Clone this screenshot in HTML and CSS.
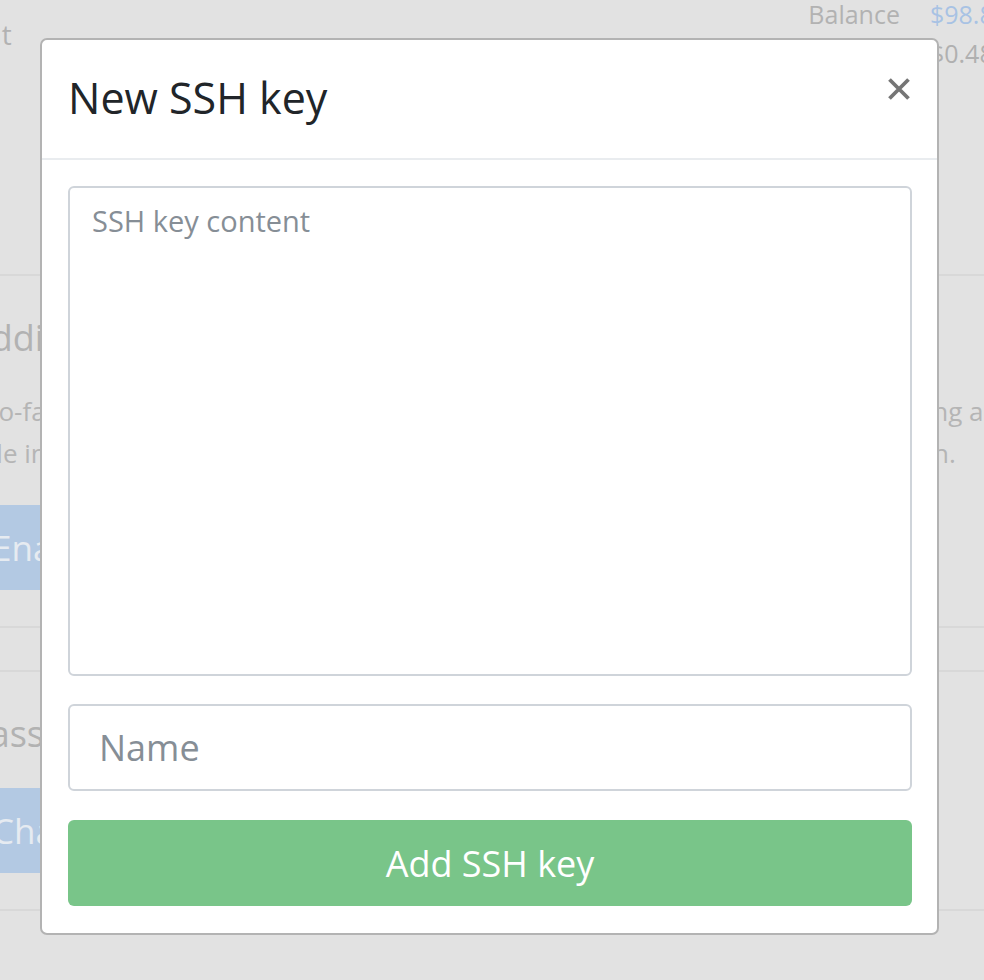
FILE: index.html
```html
<!DOCTYPE html>
<html lang="en">
<head>
    <meta charset="UTF-8">
    <meta name="viewport" content="width=device-width, initial-scale=1.0">
    <title>Account settings</title>
    <link rel="stylesheet" href="styles.css">
</head>
<body>
    <div class="page">
        <div class="topbar">
            <h1 class="title">Account</h1>
            <div class="balance">
                <span class="label">Balance</span>
                <span class="value blue">$98.85</span>
                <span class="label">Usage</span>
                <span class="value">$0.48</span>
            </div>
        </div>

        <div class="section">
            <h2>Additional security</h2>
            <p class="text">
                <span class="line">Two-factor authentication adds an additional layer of account security by requiring a code</span>
                <span class="line">Able in any phone authenticator app, so you will need a code each time you log in.</span>
            </p>
            <button class="btn-blue">Enable two-factor authentication</button>
        </div>

        <div class="section">
            <h2>Password</h2>
            <button class="btn-blue">Change password</button>
        </div>
    </div>

    <!-- modal -->
    <div class="modal">
        <div class="modal-header">
            <h3 class="modal-title">New SSH key</h3>
            <button class="close" aria-label="Close">
                <svg width="22" height="22" viewBox="0 0 22 22">
                    <path d="M1.5 1.5 L20.5 20.5 M20.5 1.5 L1.5 20.5" stroke="#757575" stroke-width="3.8" fill="none"/>
                </svg>
            </button>
        </div>
        <div class="modal-body">
            <textarea class="key-content" placeholder="SSH key content"></textarea>
            <input class="key-name" type="text" placeholder="Name">
            <button class="btn-add">Add SSH key</button>
        </div>
    </div>
</body>
</html>
```

FILE: styles.css
```css
html, body {
    margin: 0;
    height: 100%;
    overflow: hidden;
}
body {
    background: #e2e2e2;
    font-family: "Open Sans", "Liberation Sans", sans-serif;
    color: #b2b2b2;
}
.page {
    width: 1040px;
    margin-left: -32px;
}

/* background page, dimmed by the modal */
.topbar {
    display: flex;
    justify-content: space-between;
    align-items: flex-start;
    height: 274px;
    border-bottom: 2px solid #d8d8d8;
}
.title {
    margin: 14px 0 0 -62px;
    font-size: 28px;
    font-weight: 400;
    line-height: 40px;
}
.balance {
    display: grid;
    grid-template-columns: auto auto;
    column-gap: 30px;
    row-gap: 11px;
    font-size: 25px;
    line-height: 28px;
}
.value {
    color: #b0b0b0;
}
.blue {
    color: #a8c2e4;
}
.section {
    padding: 36px 0 36px;
    border-bottom: 2px solid #d8d8d8;
}
.section + .section {
    margin-top: 42px;
    border-top: 2px solid #d8d8d8;
}
.section h2 {
    margin: 0 0 26px;
    font-size: 36px;
    font-weight: 400;
    line-height: 52px;
}
.section + .section h2 {
    margin-bottom: 28px;
}
.text {
    margin: 0 0 31px -4px;
    font-size: 26px;
    line-height: 42px;
    color: #b5b5b5;
}
.line {
    display: block;
    white-space: nowrap;
}
.btn-blue {
    height: 85px;
    padding: 0 24px;
    border: none;
    border-radius: 6px;
    background: #b3c9e3;
    color: #e6ebf1;
    font-family: "Open Sans", "Liberation Sans", sans-serif;
    font-size: 35px;
}

/* modal */
.modal {
    position: fixed;
    left: 40px;
    top: 38px;
    width: 899px;
    box-sizing: border-box;
    background: #fff;
    border: 2px solid #b3b3b3;
    border-radius: 7px;
}
.modal-header {
    display: flex;
    justify-content: space-between;
    align-items: flex-start;
    padding: 32px 27px 34px 26px;
    border-bottom: 2px solid #e9ecef;
}
.modal-title {
    margin: 0;
    font-size: 43px;
    font-weight: 400;
    line-height: 52px;
    color: #212529;
}
.close {
    margin-top: 6px;
    padding: 0;
    border: none;
    background: none;
    line-height: 0;
    cursor: pointer;
}
.modal-body {
    display: flex;
    flex-direction: column;
    padding: 26px 25px 27px 26px;
}
.key-content,
.key-name {
    box-sizing: border-box;
    width: 100%;
    border: 2px solid #cfd4da;
    border-radius: 6px;
    font-family: "Open Sans", "Liberation Sans", sans-serif;
    color: #495057;
    outline: none;
}
.key-content {
    height: 490px;
    padding: 11px 22px;
    font-size: 29px;
    line-height: 1.5;
    resize: none;
}
.key-name {
    height: 87px;
    margin-top: 28px;
    padding: 0 29px;
    font-size: 36px;
}
.key-content::placeholder,
.key-name::placeholder {
    color: #868e96;
}
.btn-add {
    height: 86px;
    margin-top: 29px;
    border: none;
    border-radius: 6px;
    background: #79c589;
    color: #fff;
    font-family: "Open Sans", "Liberation Sans", sans-serif;
    font-size: 36px;
    cursor: pointer;
}
```
